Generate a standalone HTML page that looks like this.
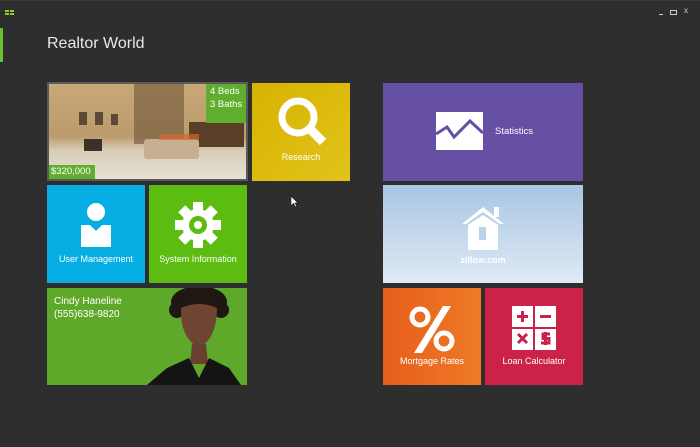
<!DOCTYPE html>
<html><head><meta charset="utf-8"><style>
body{margin:0;width:700px;height:447px;background:#2e2e2e;position:relative;overflow:hidden;font-family:"Segoe UI","Liberation Sans",sans-serif;color:#fff}
.t{position:absolute;overflow:hidden}
.lbl{position:absolute;left:0;right:0;text-align:center;font-size:9px;color:#fff;white-space:nowrap}
</style></head><body>
<div style="position:absolute;left:0;top:0;width:700px;height:1px;background:#3a3a3a"></div>
<div style="position:absolute;left:5px;top:10px;width:4px;height:2px;background:#8ccf2a;box-shadow:5px 0 #8ccf2a,0 3px #8ccf2a,5px 3px #8ccf2a"></div>
<div style="position:absolute;left:0;top:28px;width:3px;height:34px;background:#6cbf2c"></div>
<div style="position:absolute;left:659px;top:14px;width:4px;height:1px;background:#ccc"></div>
<div style="position:absolute;left:670px;top:10px;width:5px;height:3px;border:1px solid #ccc"></div>
<div style="position:absolute;left:684px;top:6px;font-size:8px;color:#ccc">x</div>
<div style="position:absolute;left:47px;top:35px;font-size:16px;color:#e8e8e8">Realtor World</div>

<!-- photo tile -->
<div class="t" style="left:47px;top:82px;width:201px;height:99px;background:#5a5a5a">
 <div style="position:absolute;left:2px;top:2px;width:197px;height:95px;background:linear-gradient(180deg,#c9a877 0%,#bb9a6c 55%,#d8cdb8 70%,#e6dfd2 100%)">
  <div style="position:absolute;left:85px;top:0;width:50px;height:60px;background:#6e5538;opacity:.6"></div>
  <div style="position:absolute;left:30px;top:28px;width:8px;height:13px;background:#5a4a34"></div>
  <div style="position:absolute;left:46px;top:28px;width:8px;height:13px;background:#5a4a34"></div>
  <div style="position:absolute;left:62px;top:30px;width:7px;height:11px;background:#5a4a34"></div>
  <div style="position:absolute;left:140px;top:38px;width:55px;height:25px;background:#5a3f28"></div>
  <div style="position:absolute;left:95px;top:55px;width:55px;height:20px;background:#c7b092;border-radius:3px"></div>
  <div style="position:absolute;left:35px;top:55px;width:18px;height:12px;background:#3a3028"></div>
  <div style="position:absolute;left:110px;top:50px;width:40px;height:6px;background:#d26a30;opacity:.7"></div>
 </div>
 <div style="position:absolute;right:2px;top:2px;width:40px;height:39px;background:#5fae2e;font-size:9.5px;line-height:13px;padding:1px 0 0 4px;box-sizing:border-box;white-space:nowrap">4 Beds<br>3 Baths</div>
 <div style="position:absolute;left:2px;bottom:2px;width:44px;height:14px;background:#5fae2e;font-size:9.5px;line-height:14px;padding-left:2px;white-space:nowrap">$320,000</div>
</div>

<!-- research -->
<div class="t" style="left:252px;top:83px;width:98px;height:98px;background:linear-gradient(135deg,#d7b300,#e2c31c)">
 <svg style="position:absolute;left:25px;top:14px" width="50" height="50" viewBox="0 0 50 50"><circle cx="21" cy="20" r="16" fill="none" stroke="#fff" stroke-width="7"/><path d="M32 31 L46 45" stroke="#fff" stroke-width="9"/></svg>
 <div class="lbl" style="top:69px">Research</div>
</div>

<!-- user mgmt -->
<div class="t" style="left:47px;top:185px;width:98px;height:98px;background:#06aee4">
 <svg style="position:absolute;left:33px;top:18px" width="32" height="46" viewBox="0 0 32 46"><circle cx="16" cy="9" r="9" fill="#fff"/><path d="M1 22 L10 22 L16 28 L22 22 L31 22 L31 44 L1 44 Z" fill="#fff"/></svg>
 <div class="lbl" style="top:69px">User Management</div>
</div>

<!-- system -->
<div class="t" style="left:149px;top:185px;width:98px;height:98px;background:#5cbc12">
 <svg style="position:absolute;left:26px;top:17px" width="46" height="46" viewBox="0 0 46 46"><g fill="#fff" transform="translate(23 23)"><g id="k"><rect x="-5" y="-23" width="10" height="10"/></g><use href="#k" transform="rotate(45)"/><use href="#k" transform="rotate(90)"/><use href="#k" transform="rotate(135)"/><use href="#k" transform="rotate(180)"/><use href="#k" transform="rotate(225)"/><use href="#k" transform="rotate(270)"/><use href="#k" transform="rotate(315)"/><circle r="16"/></g><circle cx="23" cy="23" r="9" fill="#5cbc12"/><circle cx="23" cy="23" r="4" fill="#fff"/></svg>
 <div class="lbl" style="top:69px">System Information</div>
</div>

<!-- cindy -->
<div class="t" style="left:47px;top:288px;width:200px;height:97px;background:#5fa92a">
 <div style="position:absolute;left:7px;top:7px;font-size:10px;line-height:13px">Cindy Haneline<br>(555)638-9820</div>
 <svg style="position:absolute;left:100px;top:0" width="100" height="97" viewBox="0 0 100 97">
  <ellipse cx="52" cy="14" rx="28" ry="16" fill="#1e1712"/>
  <circle cx="30" cy="22" r="8" fill="#1e1712"/><circle cx="74" cy="22" r="8" fill="#1e1712"/>
  <path d="M34 20 Q33 50 52 60 Q70 50 70 20 Q52 12 34 20 Z" fill="#6e4432"/>
  <path d="M45 56 L59 56 L61 76 L43 76 Z" fill="#6a3f2e"/>
  <path d="M0 97 L20 80 L42 70 L52 90 L62 70 L82 80 L94 97 Z" fill="#141414"/>
 </svg>
</div>

<!-- statistics -->
<div class="t" style="left:383px;top:83px;width:200px;height:98px;background:#6550a3">
 <svg style="position:absolute;left:53px;top:29px" width="48" height="39" viewBox="0 0 48 39"><rect x="0" y="0" width="47" height="38" fill="#fff"/><path d="M0 22 L11 15 L18 25 L34 9 L47 21" fill="none" stroke="#6550a3" stroke-width="3"/></svg>
 <div style="position:absolute;left:112px;top:43px;font-size:9.5px">Statistics</div>
</div>

<!-- zillow -->
<div class="t" style="left:383px;top:185px;width:200px;height:98px;background:linear-gradient(180deg,#a9c5e2,#dfeaf6)">
 <svg style="position:absolute;left:77px;top:19px" width="48" height="50" viewBox="0 0 48 50"><path d="M2 20 L23 3 L44 20 L40 20 L23 8 L6 20 Z" fill="#fff"/><rect x="34" y="3" width="5" height="10" fill="#fff"/><path d="M8 21 L23 11 L38 21 L38 46 L8 46 Z" fill="#fff"/><rect x="19" y="23" width="7" height="13" fill="#bcd2ea"/></svg>
 <div class="lbl" style="top:70px;font-weight:bold">zillow.com</div>
</div>

<!-- mortgage -->
<div class="t" style="left:383px;top:288px;width:98px;height:97px;background:linear-gradient(90deg,#e65e1c,#ef7a26)">
 <svg style="position:absolute;left:25px;top:17px" width="50" height="50" viewBox="0 0 50 50"><circle cx="12" cy="12" r="8" fill="none" stroke="#fff" stroke-width="5"/><circle cx="36" cy="36" r="8" fill="none" stroke="#fff" stroke-width="5"/><path d="M35 1 L43 1 L14 48 L6 48 Z" fill="#fff"/></svg>
 <div class="lbl" style="top:68px">Mortgage Rates</div>
</div>

<!-- loan -->
<div class="t" style="left:485px;top:288px;width:98px;height:97px;background:#cb2347">
 <svg style="position:absolute;left:27px;top:18px" width="46" height="46" viewBox="0 0 46 46"><g fill="#fff"><rect x="0" y="0" width="21" height="21"/><rect x="23" y="0" width="21" height="21"/><rect x="0" y="23" width="21" height="21"/><rect x="23" y="23" width="21" height="21"/></g><g stroke="#cb2347" stroke-width="3" fill="none"><path d="M5 10.5 H16 M10.5 5 V16"/><path d="M28 10.5 H39"/><path d="M6 28 L15 37 M15 28 L6 37"/><path d="M38 28 H31 V32.5 H37 V37 H29 M33.5 26 V39"/></g></svg>
 <div class="lbl" style="top:68px">Loan Calculator</div>
</div>

<svg style="position:absolute;left:291px;top:196px" width="8" height="12" viewBox="0 0 8 12"><path d="M0 0 L0 10 L2.5 7.5 L4.5 11 L6 10 L4 7 L7 7 Z" fill="#fff" stroke="#000" stroke-width=".6"/></svg>
</body></html>
